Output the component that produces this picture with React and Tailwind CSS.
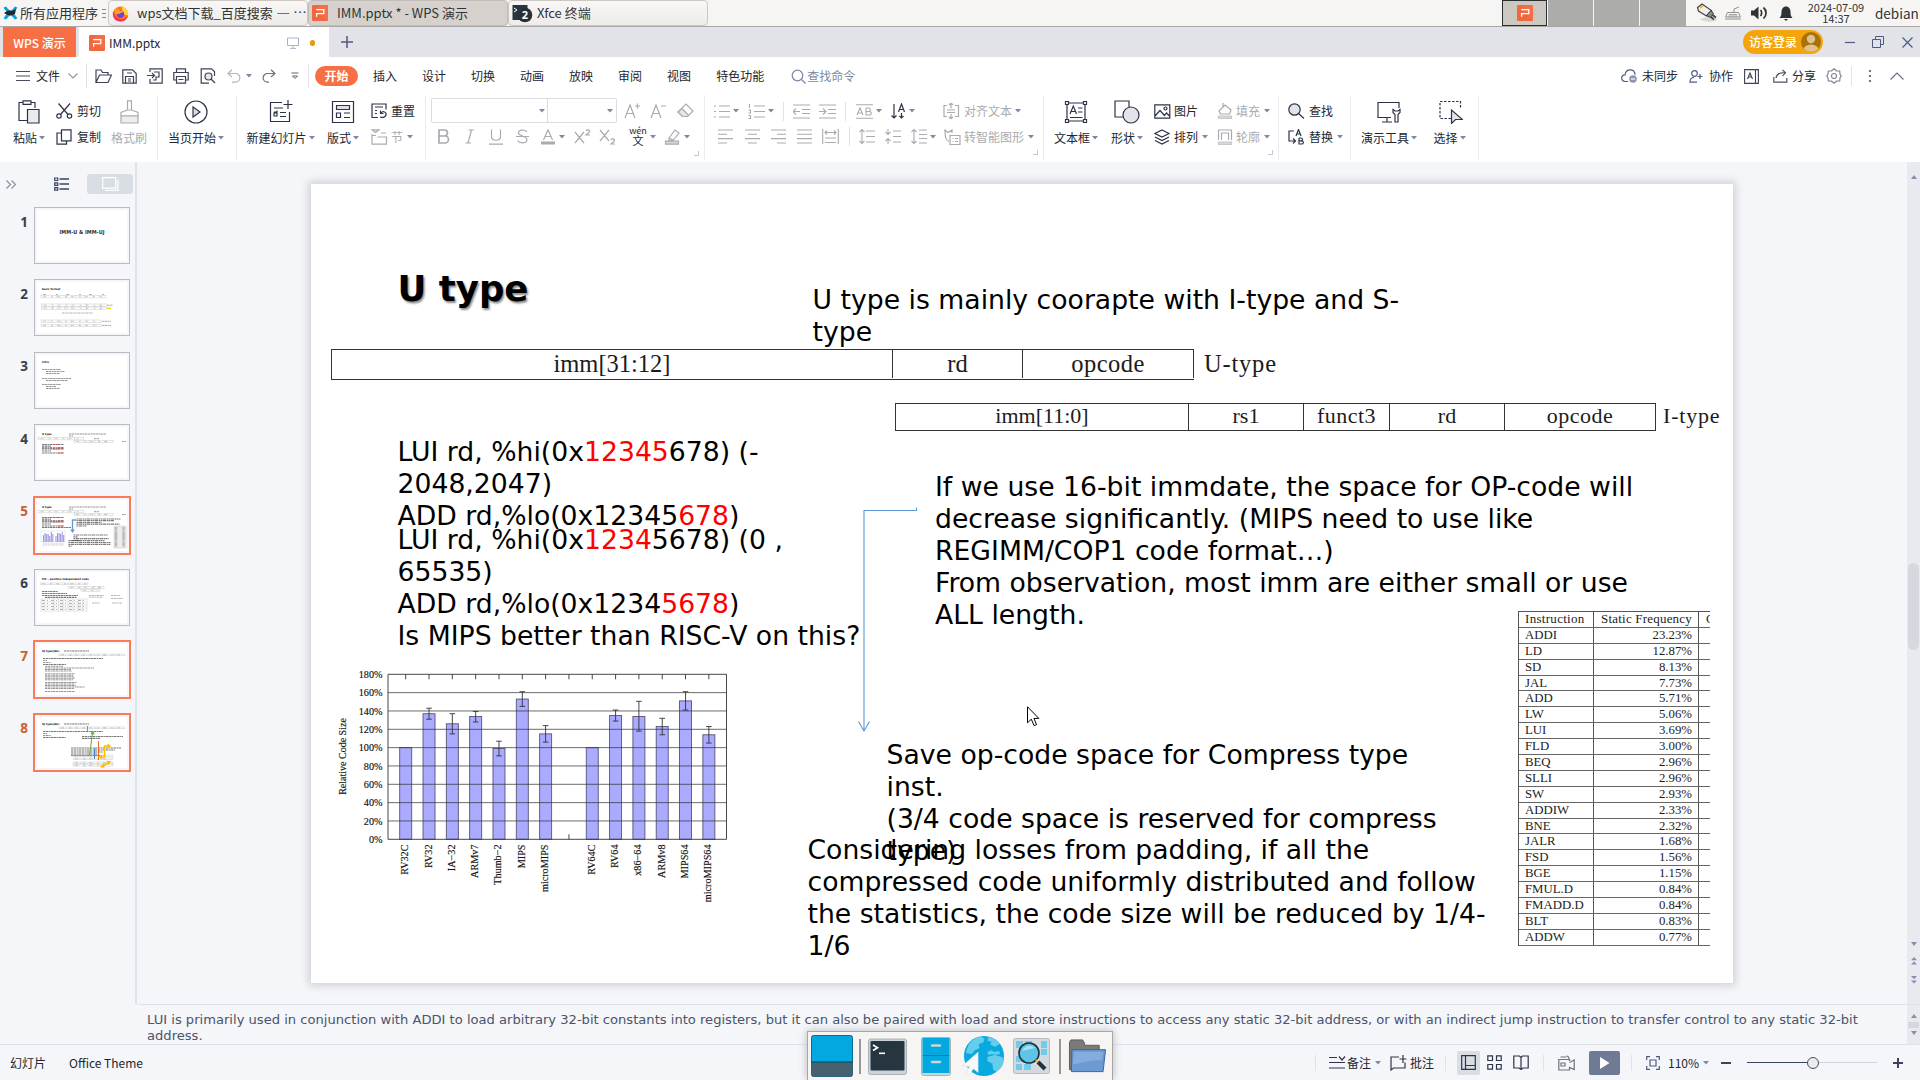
import React from "react";

/* ---------- shared pieces ---------- */

function Svg({ w = 16, h = 16, className = "", sw = 1.2, children }) {
  return (
    <svg
      width={w}
      height={h}
      viewBox={`0 0 ${w} ${h}`}
      fill="none"
      stroke="currentColor"
      strokeWidth={sw}
      className={"shrink-0 " + className}
    >
      {children}
    </svg>
  );
}

function Caret({ className = "ml-[2px]" }) {
  return (
    <svg width="6" height="4" viewBox="0 0 6 4" className={"shrink-0 " + className}>
      <path d="M0 0h6L3 3.6z" fill="#7c88a6" />
    </svg>
  );
}

function Big({ className, icon, label, caret = true }) {
  return (
    <div className={"flex shrink-0 flex-col items-center " + className}>
      <div className="flex h-[32px] items-center">{icon}</div>
      <div className="flex h-5 items-center whitespace-nowrap">
        <span>{label}</span>
        {caret && <Caret />}
      </div>
    </div>
  );
}

function Group({ className, children }) {
  return <div className={"flex h-[64px] shrink-0 border-r border-[#e9ebf0] " + className}>{children}</div>;
}

function Row({ children, className = "" }) {
  return <div className={"flex h-[27px] items-center whitespace-nowrap " + className}>{children}</div>;
}

function VLine({ className }) {
  return <div className={"w-px shrink-0 bg-[#dfe2e8] " + className} />;
}

function PLogo({ w = 16, h = 16, className = "" }) {
  return (
    <svg width={w} height={h} viewBox="0 0 16 16" className={"shrink-0 " + className}>
      <rect width="16" height="16" rx="1.2" fill="#f0683f" />
      <path d="M8 0h6.8a1.2 1.2 0 0 1 1.2 1.2V16L4 4z" fill="#f4744d" opacity=".6" />
      <path d="M4.2 4.7h7.6v4H4.6v3" fill="none" stroke="#fff" strokeWidth="1.3" />
    </svg>
  );
}

/* ---------- desktop panel ---------- */

function DesktopPanel() {
  return (
    <div className="flex h-[27px] border-b border-[#aaa6a2] bg-[#f6f5f4] text-[13px] text-[#2e3436]">
      <div className="flex w-[108px] items-center pl-[3px] whitespace-nowrap">
        <Svg w={15} h={16} sw={3}>
          <path d="M2 2c2 5 9 7 11 12M13 2c-2 5-9 7-11 12" stroke="#00a3e0" />
          <path d="M1 8c3-2 4-3 8-2l4-2-1 5c-3 2-7 2-11-1z" fill="#20272b" stroke="none" />
        </Svg>
        <span className="ml-[2px]">所有应用程序</span>
        <div className="ml-[4px] flex flex-col gap-[3px]">
          <div className="h-px w-1 bg-[#8a8a88]" />
          <div className="h-px w-1 bg-[#8a8a88]" />
          <div className="h-px w-1 bg-[#8a8a88]" />
        </div>
      </div>
      <div className="flex h-[26px] w-[200px] items-center rounded-[4px] border border-[#cdc7c2] bg-gradient-to-b from-[#f8f7f6] to-[#eeecea] pl-[3px] whitespace-nowrap">
        <svg width="17" height="17" viewBox="0 0 17 17" className="shrink-0">
          <circle cx="8.5" cy="9" r="7.6" fill="#ff7a1a" />
          <path d="M10 1c4 2 6.500 5 6.300 9-2 1-5-1-6-4z" fill="#ffd43a" />
          <path d="M1 6C0 12 3 16.500 8.500 16.600c4 0 7-3 7.600-6-3 4-9 5-12 1.500C2.500 10 2 8 1 6z" fill="#f5305f" />
          <circle cx="8.400" cy="9.300" r="3.700" fill="#7a3fd0" />
          <path d="M3 4.500c2-.5 4 0 5 1.500 2 0 3 .5 3 1-1 1-3 .5-4 2L3.500 9z" fill="#ffa51f" />
        </svg>
        <span className="ml-[8px]">wps文档下载_百度搜索</span>
        <span className="ml-[4px] font-['Noto_Sans'] text-[#6e7375]">—</span>
        <span className="ml-[4px] font-['Noto_Sans'] tracking-[1px]">···</span>
      </div>
      <div className="flex h-[26px] w-[200px] items-center rounded-[4px] border border-[#c3bdb8] bg-[#d6d1cd] pl-[3px] whitespace-nowrap">
        <PLogo />
        <span className="ml-[9px]">IMM.pptx * - WPS 演示</span>
      </div>
      <div className="flex h-[26px] w-[200px] items-center rounded-[4px] border border-[#cdc7c2] bg-gradient-to-b from-[#f8f7f6] to-[#eeecea] pl-[3px] whitespace-nowrap">
        <svg width="21" height="19" viewBox="0 0 21 19">
          <rect x=".5" y="1" width="15" height="15" fill="#263640" />
          <path d="M2 4l3 2-3 2" fill="none" stroke="#fff" strokeWidth="1" />
          <circle cx="13" cy="11" r="7.300" fill="#2b2f33" />
          <text x="13" y="15" fill="#fff" fontSize="11" fontWeight="bold" textAnchor="middle" className="font-['Noto_Sans']">
            2
          </text>
        </svg>
        <span className="ml-1">Xfce 终端</span>
      </div>
      <div className="flex-1" />
      <div className="flex h-[26px] gap-px">
        <div className="flex h-[26px] w-[45px] items-center justify-center border border-[#2b2f31] bg-[#cbc7c1]">
          <PLogo />
        </div>
        <div className="w-[45px] bg-[#acacaa]" />
        <div className="w-[45px] bg-[#acacaa]" />
        <div className="w-[46px] bg-[#acacaa]" />
      </div>
      <div className="flex w-[234px] items-center">
        <svg width="22" height="20" viewBox="0 0 22 20" className="ml-[10px] shrink-0">
          <path d="M4 16c3 3 11 4 17 1l-3-5z" fill="#000" opacity=".12" />
          <path d="M1.500 4.500L6 1l9.500 6.500-5 5.500-8-5z" fill="#efefed" stroke="#444" strokeWidth="1.200" />
          <path d="M10.500 12.500L15 7.500l2.500 3-3 4z" fill="#8b8b88" stroke="#333" />
          <path d="M16.500 12l3.500 2.500M15 14l3 2.500" stroke="#444" strokeWidth="1.800" />
          <path d="M4 5l3-2.500" stroke="#e8b33a" strokeWidth="1.800" />
        </svg>
        <svg width="18" height="14" viewBox="0 0 18 14" className="ml-[6px] shrink-0" fill="none" stroke="#8f8f8d">
          <path d="M3.500 6.500h11l2 4.500H1.500zM1 13h16" />
          <path d="M5 8.500h8M4.500 10h9" strokeWidth=".8" />
          <path d="M10 6V3l5-2" />
        </svg>
        <svg width="17" height="14" viewBox="0 0 17 14" className="ml-[9px] shrink-0">
          <path d="M0 4.500h3L7.500.5v13L3 9.500H0z" fill="#2e3436" />
          <path d="M9.500 4c1.500 1.500 1.500 4.500 0 6M12.500 1.500c3.400 3 3.400 8 0 11" fill="none" stroke="#2e3436" strokeWidth="1.700" />
        </svg>
        <svg width="14" height="15" viewBox="0 0 14 15" className="ml-[11px] shrink-0">
          <path d="M7 .5c3 0 4.500 2.500 4.500 5.500 0 3 .5 4.500 2 6H.5c1.500-1.500 2-3 2-6C2.500 3 4 .5 7 .5zM5 13h4l-2 2z" fill="#2e3436" />
        </svg>
        <div className="ml-[14px] w-[58px] shrink-0 text-center text-[11px] leading-[11px] whitespace-nowrap">
          <div>2024-07-09</div>
          <div>14:37</div>
        </div>
        <span className="ml-[10px] text-[13.500px]">debian</span>
      </div>
    </div>
  );
}

/* ---------- window title / tabs ---------- */

function TabBar() {
  return (
    <div className="flex h-[30px] items-center bg-[#e1e3e8] pl-[3px] text-[12px]">
      <div className="flex h-full w-[73px] items-center justify-center bg-[#f66f45] pt-px font-medium whitespace-nowrap text-white">
        WPS 演示
      </div>
      <div className="ml-[3px] flex h-full w-[250px] items-center bg-white pt-[2px] pl-[10px] text-[#23262d]">
        <PLogo />
        <span className="ml-1 w-[179px] text-[12px] whitespace-nowrap">IMM.pptx</span>
        <Svg w={12} h={12} sw={1} className="-ml-[1px] text-[#aab3cc]">
          <path d="M.5 1h11v7.500H.5zM6 8.500V11M3 11.400h6" />
        </Svg>
        <div className="ml-[11px] h-[6px] w-[5px] rounded-full bg-[#e59a0c]" />
      </div>
      <Svg w={12} h={12} sw={1.500} className="ml-[12px] text-[#4d5b80]">
        <path d="M6 0v12M0 6h12" />
      </Svg>
      <div className="flex-1" />
      <VLine className="h-5 bg-[#c7cad3]" />
      <div className="ml-[8px] flex h-6 w-[80px] items-center rounded-full bg-[#f5a50c] pl-[6px] text-[12px] font-medium text-white">
        <span className="whitespace-nowrap">访客登录</span>
        <svg width="20" height="20" viewBox="0 0 20 20" className="ml-[4px] shrink-0">
          <clipPath id="av"><circle cx="10" cy="10" r="10" /></clipPath>
          <circle cx="10" cy="10" r="10" fill="#a8720a" />
          <g clipPath="url(#av)" fill="#dfc28c">
            <circle cx="10" cy="7" r="4.200" />
            <ellipse cx="10" cy="18" rx="7.500" ry="5.500" />
          </g>
        </svg>
      </div>
      <VLine className="ml-[8px] h-5 bg-[#c7cad3]" />
      <Svg w={10} h={12} className="ml-[13px] text-[#4d5b80]"><path d="M0 6.500h10" /></Svg>
      <Svg w={12} h={12} sw={1} className="ml-[17px] text-[#4d5b80]">
        <path d="M.5 3.500h8v8h-8zM3.500 3.500v-3h8v8h-3" />
      </Svg>
      <Svg w={11} h={11} className="mr-[7px] ml-[18px] text-[#4d5b80]"><path d="M.5.5l10 10M10.500.5l-10 10" /></Svg>
    </div>
  );
}

/* ---------- menu bar ---------- */

const menus = ["插入", "设计", "切换", "动画", "放映", "审阅", "视图", "特色功能"];

function MenuBar() {
  return (
    <div className="flex h-[38px] items-center bg-white pl-[16px] text-[12px] text-[#23262d]">
      <Svg w={14} h={12} className="text-[#4a4f5c]"><path d="M0 1.500h14M0 6h14M0 10.500h14" /></Svg>
      <span className="ml-[6px]">文件</span>
      <Svg w={10} h={6} className="ml-[8px] text-[#8f95a3]"><path d="M.5.5L5 5 9.500.5" /></Svg>
      <VLine className="ml-[8px] h-6" />
      <div className="flex items-center text-[#3d4354]">
        <Svg w={17} h={15} className="ml-[8px]"><path d="M1 13.500V1h5l1.500 2.500H13v2.500M1 13.500L4.500 6H16.500L13 13.500z" /></Svg>
        <Svg w={15} h={15} className="ml-[10px]"><path d="M.8.8h9.700l3.700 3.700v9.700H.8zM3.500 14V7.500h8V14M5 4h5M6 10h3M6 12h3" /></Svg>
        <Svg w={16} h={16} className="ml-[10px]"><path d="M3 4V.8h12.200v14.400H3V11M0 7.500h7.500M5 5l2.500 2.500L5 10M7 4h5v5H9v3H6" /></Svg>
        <Svg w={16} h={16} className="ml-[10px]"><path d="M3.500 4V.8h9V4M3.500 12H.8V4.500h14.400V12h-2.700M3.500 8.500h9v6.700h-9zM5.500 11.500h5" /></Svg>
        <Svg w={16} h={16} className="ml-[11px]"><path d="M14.500 8V3.500L11.500.8H1.200v14.400H9" /><circle cx="8.500" cy="8.500" r="3.500" fill="#e3e5ea" /><path d="M11 11l4 4" /></Svg>
      </div>
      <Svg w={14} h={14} className="ml-[11px] text-[#b3b6be]"><path d="M5 .8L1 4.500 5 8M1 4.500h7.500a4.300 4.300 0 0 1 0 8.700H5" /></Svg>
      <Caret className="ml-[5px]" />
      <Svg w={14} h={14} className="ml-[10px] text-[#6d7280]"><path d="M9 .8l4 3.700L9 8M13 4.500H5.500a4.300 4.300 0 0 0 0 8.700H7" /></Svg>
      <Svg w={8} h={8} sw={1} className="ml-[15px] text-[#5d6373]"><path d="M.5 1h7M1.500 4L4 6.500 6.500 4z" /></Svg>
      <VLine className="ml-[9px] h-6" />
      <div className="ml-[6px] flex h-5 w-[43px] items-center justify-center rounded-full bg-[#f66f45] font-bold text-white">开始</div>
      <div className="ml-[15px] flex gap-[25px] whitespace-nowrap">
        {menus.map((m) => <span key={m}>{m}</span>)}
      </div>
      <Svg w={15} h={15} className="ml-[27px] text-[#7c88a6]"><circle cx="6.500" cy="6.500" r="5.300" /><path d="M10.500 10.500l4 4" /></Svg>
      <span className="ml-[1px] text-[#7c88a6]">查找命令</span>
      <div className="flex-1" />
      <Svg w={17} h={14} className="text-[#4d5b80]">
        <path d="M7 12.500H4a3.300 3.300 0 0 1 0-6.600C4.500 2.500 6.500.8 9 .8c3 0 5 2 5 5" />
        <circle cx="12" cy="10" r="3.800" fill="#8b96b3" stroke="none" />
        <path d="M10 10h4" stroke="#fff" />
      </Svg>
      <span className="ml-[4px]">未同步</span>
      <Svg w={14} h={13} className="ml-[11px] text-[#4d5b80]"><circle cx="5.500" cy="3.500" r="2.800" /><path d="M8 12.200H1C1 9 2.500 7.500 5 7.500M11 4v5M8.500 6.500h5" /></Svg>
      <span className="ml-[6px]">协作</span>
      <Svg w={15} h={15} sw={1.100} className="ml-[11px] text-[#3d4354]">
        <path d="M.6.6h13.800v13.800H.6zM11.500.6v13.800M3.500 10L6 4l2.500 6M4.500 8h3" />
      </Svg>
      <Svg w={15} h={14} className="ml-[14px] text-[#4d5366]"><path d="M.8 8v5.200h13V9M3 9c.5-4 4-5.500 9-5.200M9.500.8l3 3-3 3" /></Svg>
      <span className="ml-[4px]">分享</span>
      <Svg w={16} h={16} sw={1.200} className="ml-[10px] text-[#83889a]">
        <path d="M8 .8l2.500 2 3.200.2.300 3 1.200 2-1.200 2-.3 3-3.200.2-2.500 2-2.500-2-3.200-.2-.3-3L.8 8 2 6l.3-3 3.200-.2z" />
        <circle cx="8" cy="8" r="2.500" />
      </Svg>
      <VLine className="ml-[9px] h-5" />
      <Svg w={2} h={12} className="ml-[17px]"><path d="M0 1h2M0 6h2M0 11h2" stroke="#6b7690" strokeWidth="2" /></Svg>
      <Svg w={14} h={8} className="mr-4 ml-[19px] text-[#6d7280]"><path d="M.5 7.500L7 1l6.500 6.500" /></Svg>
    </div>
  );
}

/* ---------- ribbon ---------- */

const dark = "text-[#2e3448]";
const dim = "text-[#a9abb0]";

function Lines({ d, w = 16, className = "" }) {
  return <Svg w={w} h={15} className={className + " text-[#a9abb0]"} sw={1.1}><path d={d} /></Svg>;
}

function Ribbon() {
  return (
    <div className="flex h-[67px] bg-white pt-px text-[12px] text-[#23262d]">
      <Group className="w-[158px] pl-[13px]">
        <Big className="w-[32px]" label="粘贴" icon={
          <Svg w={22} h={24} className={dark}><path d="M9 20.500H1V2.500h4M13 2.500h4V8M5 .8h8v3.500H5z" /><path d="M9.500 9.500h11.500V23H9.500z" fill="#e9eaee" /></Svg>} />
        <div className="ml-[11px] w-[46px]">
          <Row className="pt-[3px]">
            <Svg w={17} h={16} className={dark}><path d="M2.500.5l9.500 11M14 .5L4.500 11.500" /><circle cx="3" cy="13" r="2.200" /><circle cx="13.500" cy="13" r="2.200" /></Svg>
            <span className="ml-1">剪切</span>
          </Row>
          <Row>
            <Svg w={16} h={16} className={dark}><path d="M5.500.8h9.500v11H5.500zM5.500 4H1v11.200h9.500V12" /></Svg>
            <span className="ml-[5px]">复制</span>
          </Row>
        </div>
        <div className={"ml-[9px] " + dim}>
          <Big className="w-[36px]" label="格式刷" caret={false} icon={
            <Svg w={19} h={24}><path d="M7.500 10V.8h4V10M1 16v-3.500L7.500 10h4l6.500 2.500V16z" /><path d="M1 16h17v7H1z" fill="#eceded" /></Svg>} />
        </div>
      </Group>

      <Group className="w-[79px] pl-[10px]">
        <Big className="w-[56px]" label="当页开始" icon={
          <Svg w={24} h={24} className={dark}><circle cx="12" cy="12" r="11" /><path d="M9 7l7 5-7 5z" fill="#dddfe5" /></Svg>} />
      </Group>

      <Group className="w-[189px] pl-[9px]">
        <Big className="w-[69px]" label="新建幻灯片" icon={
          <Svg w={24} h={24} className={dark}><path d="M13 2.500H1.500v19h19V12M19 0v9M14.500 4.500h9M5 8h9M5 12h3v-1.500M5 13h3v3H5zM11 12.500h6M11 16.500h6" /></Svg>} />
        <Big className="ml-[12px] w-[32px]" label="版式" icon={
          <Svg w={24} h={24} className={dark}><path d="M1.500 1.500h21v21h-21z" /><path d="M5.500 5.500h13v4h-13z" fill="#dddfe5" /><path d="M5.500 13h4v4.500h-4zM13 13h6M13 17.500h6" /></Svg>} />
        <div className="ml-[12px]">
          <Row className="pt-[3px]">
            <Svg w={17} h={16} className={dark}><path d="M15 6.500V1H1v13.500h6M4 4h8M4 7.500h2M4 10.500h2M9 14c4 1.500 6.500-1 6-3.500-.5-2-3.500-2.500-5-.5M9.500 7.500v3h3" /></Svg>
            <span className="ml-[3px]">重置</span>
          </Row>
          <Row className={dim}>
            <Svg w={17} h={16}><path d="M1 .8h7L4.500 3.500zM10 4h5M1 6.500h4M1 5v10.200h14.500V8H6.500" /></Svg>
            <span className="ml-[3px]">节</span>
            <Caret className="ml-[4px]" />
          </Row>
        </div>
      </Group>

      <Group className="w-[279px] flex-col pl-[5px]">
        <Row className={"pt-[2px] " + dim}>
          <div className="flex h-[25px] w-[186px] rounded-[2px] border border-[#d9dce2]">
            <div className="flex w-[117px] items-center justify-end border-r border-[#d9dce2] pr-[2px]"><Caret /></div>
            <div className="flex w-[68px] items-center justify-end pr-[3px]"><Caret /></div>
          </div>
          <Svg w={17} h={16} className="ml-[7px]"><path d="M1 15L6 2l5 13M3 10.500h6.500M11 3h5M13.500.5v5" /></Svg>
          <Svg w={17} h={16} className="ml-[9px]"><path d="M1 15L6 2l5 13M3 10.500h6.500M11 3h5" /></Svg>
          <Svg w={17} h={15} className="ml-[10px]"><path d="M1 9l8-8 7 7-5.500 5.500h-5z" /><path d="M5 5.500L11.500 12l-1 1.500h-5L1 9z" fill="#e4e5e8" /></Svg>
        </Row>
        <Row className={dim}>
          <Svg w={13} h={15} sw={1.700} className="ml-[6px]"><path d="M2 1h5.500a3 3 0 0 1 0 6H2zM2 7h6a3.300 3.300 0 0 1 0 7H2z" /></Svg>
          <Svg w={10} h={15} className="ml-[15px]"><path d="M3.500 1H9M.5 14H6M6.500 1L3 14" /></Svg>
          <Svg w={14} h={16} className="ml-[14px]"><path d="M2.500.5v7c0 5 9 5 9 0v-7M0 15.200h14" /></Svg>
          <Svg w={13} h={15} className="ml-[13px]"><path d="M11 3C9 0 2.500.5 2.500 4c0 3 8.500 3 8.500 6.500 0 4-7.500 4.500-9.500 1M0 7.500h13" /></Svg>
          <Svg w={14} h={16} className="ml-[12px]"><path d="M2.500 11L7 .8 11.500 11M4 7.500h6" /><path d="M0 14h14" strokeWidth="3" /></Svg>
          <Caret className="ml-[4px]" />
          <Svg w={17} h={16} className="ml-[9px]"><path d="M1 3l9 11M10 3L1 14M12 2c1-2 4-1 3.500.5-.5 1.500-2 2-3.500 3.500h4" /></Svg>
          <Svg w={17} h={16} className="ml-[8px]"><path d="M1 1l9 11M10 1L1 12M12 11c1-2 4-1 3.500.5-.5 1.500-2 2-3.500 3.500h4" /></Svg>
          <div className="ml-[13px] flex w-[18px] flex-col items-center text-[#23262d]">
            <span className="text-[9px] leading-[8px]">wén</span>
            <span className="text-[11px] leading-[11px]">文</span>
          </div>
          <Caret className="ml-[3px]" />
          <Svg w={17} h={16} className="ml-[8px]"><path d="M5 9l6-8 4 3-6 7.500H5zM5.500 9l4 2.500" /><path d="M1.500 12.200h13v3h-13z" fill="#d6d7da" /></Svg>
          <Caret className="ml-[3px]" />
        </Row>
        <div className="mt-[1px] mr-[5px] h-[5px] w-[5px] self-end border-r border-b border-[#c3c8d4]" />
      </Group>

      <Group className="w-[339px] flex-col pl-[8px]">
        <Row className={"pt-[3px] " + dim}>
          <Lines w={17} d="M6 2h11M6 7.500h11M6 13h11M1 2h2M1 7.500h2M1 13h2" />
          <Caret className="ml-[3px]" />
          <Lines w={17} className="ml-[9px]" d="M6 2h11M6 7.500h11M6 13h11M1.500 0v4M.5 6h2v3h-2M.5 11.500h2v3h-2" />
          <Caret className="ml-[3px]" />
          <VLine className="ml-[9px] h-[19px]" />
          <Lines w={17} className="ml-[9px]" d="M0 1h17M9 5.500h8M9 9.500h8M0 14h17M0 7.500h7M3 4.500l-3 3 3 3" />
          <Lines w={17} className="ml-[9px]" d="M0 1h17M9 5.500h8M9 9.500h8M0 14h17M0 7.500h7M4 4.500l3 3-3 3" />
          <VLine className="ml-[9px] h-[19px]" />
          <Lines w={17} className="ml-[10px]" d="M0 .7h17M0 14.300h17M1 11l3-7 3 7M2.200 9h4M10 4v7h3c3 0 3-3.500 0-3.500h-3M10 4h2.500c2.500 0 2.500 3.500 0 3.500" />
          <Caret className="ml-[3px]" />
          <Svg w={15} h={16} className={"ml-[9px] " + dark}><path d="M3 1v14M.5 12.500L3 15l2.500-2.500M7.500 9L10.500 1l3 8M8.500 6.500h4M10.500 10v5M8.500 13l2 2 2-2" /></Svg>
          <Caret className="ml-[3px]" />
          <Svg w={17} h={16} className="ml-[28px]"><path d="M4 2.500H1v11h3M12 2.500h3.500v11H12M4 7h8M4 9.500h8M8 0v5.500M6 2l2-2 2 2M8 11v5M6 14l2 2 2-2" /></Svg>
          <span className="ml-[4px]">对齐文本</span>
          <Caret className="ml-[3px]" />
        </Row>
        <Row className={dim}>
          <Lines w={15} className="ml-[5px]" d="M0 1h15M0 5.300h9M0 9.600h15M0 14h9" />
          <Lines w={15} className="ml-[12px]" d="M0 1h15M3 5.300h9M0 9.600h15M3 14h9" />
          <Lines w={15} className="ml-[11px]" d="M0 1h15M6 5.300h9M0 9.600h15M6 14h9" />
          <Lines w={15} className="ml-[11px]" d="M0 1h15M0 5.300h15M0 9.600h15M0 14h15" />
          <Lines w={17} className="ml-[10px]" d="M.7 0v15M16.300 0v15M3 3.500h11M5 1.500l-2 2 2 2M12 1.500l2 2-2 2M3 9h11M3 13.500h11" />
          <VLine className="ml-[10px] h-[19px]" />
          <Lines w={16} className="ml-[9px]" d="M7 2h9M7 7.500h9M7 13h9M3 0v15M.5 3L3 .5 5.500 3M.5 12L3 14.500 5.500 12" />
          <Lines w={16} className="ml-[10px]" d="M8 2h8M8 7.500h8M8 13h8M3 0v5M.5 3L3 5.500 5.500 3M3 10v5M.5 12L3 9.500 5.500 12" />
          <Lines w={16} className="ml-[10px]" d="M8 1h8M8 5.500h8M8 9.500h8M8 14h8M3 0v15M.5 3L3 .5 5.500 3M.5 12L3 14.500 5.500 12" />
          <Caret className="ml-[3px]" />
          <Svg w={17} h={16} className="ml-[8px]"><path d="M5 12.500C1.500 11 1 8 1 1l3 2.500L8 1v3M6 6.500h10v9H6zM8.500 9.500h1M8.500 12.500h1M11 9.500h3M11 12.500h3" /></Svg>
          <span className="ml-[3px]">转智能图形</span>
          <Caret className="ml-[4px]" />
        </Row>
        <div className="mt-0 mr-[5px] h-[5px] w-[5px] self-end border-r border-b border-[#c3c8d4]" />
      </Group>

      <Group className="w-[235px] pl-[10px]">
        <Big className="w-[44px]" label="文本框" icon={
          <Svg w={24} h={24} className={dark}><path d="M3 3h18v18H3zM6 14l3.300-8 3.200 8M7 11.500h4.500M14 8h4.500M14 12h4.500M6 17.500h12.500" /><path d="M1.500 1.500h3v3h-3zM19.500 1.500h3v3h-3zM1.500 19.500h3v3h-3zM19.500 19.500h3v3h-3z" fill="#fff" /></Svg>} />
        <Big className="ml-[13px] w-[32px]" label="形状" icon={
          <Svg w={26} h={24} className={dark}><path d="M1 1h14v16H1z" /><circle cx="17" cy="15" r="8" fill="#e3e4e9" /></Svg>} />
        <div className="ml-[11px] w-[57px]">
          <Row className="pt-[3px]">
            <Svg w={17} h={15} className={dark}><path d="M.8.8h15v13.400H.8zM1 12l5-5.500 4.500 5L12.500 9l3.500 3.500" /><circle cx="11.500" cy="4.500" r="1.500" /></Svg>
            <span className="ml-[3px]">图片</span>
          </Row>
          <Row>
            <Svg w={17} h={16} className={dark}><path d="M8 1l7 3.500L8 8 1 4.500zM1 8l7 3.500L15 8M1 11.500L8 15l7-3.500" /></Svg>
            <span className="ml-[3px]">排列</span>
            <Caret className="ml-[4px]" />
          </Row>
        </div>
        <div className={"ml-[6px] " + dim}>
          <Row className="pt-[3px]">
            <Svg w={17} h={16}><path d="M2 8l6-6 6 5-1.500 4h-9zM6 4V0" /><path d="M1.500 13h13v2.500h-13z" fill="#d6d7da" stroke="#c8c9cc" /></Svg>
            <span className="ml-[2px]">填充</span>
            <Caret className="ml-[4px]" />
          </Row>
          <Row>
            <Svg w={17} h={16}><path d="M1.500 11V1h13v10M4.500 11V4h7v7" /><path d="M1.500 13h13v2.500h-13z" fill="#d6d7da" stroke="#c8c9cc" /></Svg>
            <span className="ml-[2px]">轮廓</span>
            <Caret className="ml-[4px]" />
          </Row>
          <div className="mt-0 ml-[51px] h-[5px] w-[5px] border-r border-b border-[#c3c8d4]" />
        </div>
      </Group>

      <Group className="w-[72px] pl-[9px]">
        <div>
          <Row className="pt-[3px]">
            <Svg w={17} h={16} className={dark}><circle cx="6.500" cy="6.500" r="5.700" fill="#e3e4e9" /><path d="M10.500 10.500l5.500 5" /></Svg>
            <span className="ml-[4px]">查找</span>
          </Row>
          <Row>
            <Svg w={17} h={16} className={dark}><path d="M6 2H1v10h6M5 9.500L7.500 12 5 14.500M8 7l2.500-6.500L13 7M9 5h3.500M11 9v6h2.500c2.500 0 2.500-3.200 0-3.200H11M11 9h2c2 0 2 2.800 0 2.800" /></Svg>
            <span className="ml-[4px]">替换</span>
            <Caret className="ml-[4px]" />
          </Row>
        </div>
      </Group>

      <Group className="w-[128px] pl-[9px]">
        <Big className="w-[58px]" label="演示工具" icon={
          <Svg w={24} h={24} className={dark}><path d="M14 17.500H1v-15h21V8M10 17.500v4M5 22h10" /><path d="M16 9.500v3l2 2V22h3v-7.500l2-2v-3l-2 1.500h-3z" fill="#fff" /></Svg>} />
        <Big className="ml-[15px] w-[33px]" label="选择" icon={
          <Svg w={24} h={24} className={dark + " ml-[2px]"}><path d="M12 18.500H1v-17h20.500V9" strokeDasharray="2.500 1.500" /><path d="M12.500 10v13.500l4-4h7z" fill="#e3e4e9" /></Svg>} />
      </Group>
    </div>
  );
}

/* ---------- thumbnails ---------- */

function Scribble({ x, y, w, dash = "2 .5 3 .6 1.500 .4", c = "#555", h = 1 }) {
  return <path d={`M${x} ${y}h${w}`} stroke={c} strokeWidth={h} strokeDasharray={dash} opacity=".6" />;
}

function Table({ x, y, w, h = 2.400, cells = [] }) {
  return (
    <g>
      <rect x={x} y={y} width={w} height={h} fill="none" stroke="#bbb" strokeWidth=".4" />
      {cells.map((c) => <path key={c} d={`M${x + c} ${y}v${h}`} stroke="#bbb" strokeWidth=".4" />)}
      <Scribble x={x + 2} y={y + h / 2} w={w - 4} c="#999" h={0.800} dash="3 5 2 4" />
    </g>
  );
}

function Title({ x = 5, children }) {
  return <text x={x} y="7.500" fontSize="2.600" fontWeight="bold" fill="#111" className="font-['DejaVu_Sans']">{children}</text>;
}

function UTypeTop() {
  return (
    <g>
      <Title>U type</Title>
      <Scribble x={32} y={7} w={37} h={1.200} />
      <Scribble x={32} y={9} w={4} h={1.200} />
      <Table x={1.500} y={10.500} w={45} cells={[29, 36]} />
      <Scribble x={57} y={11.700} w={5} h={0.900} />
      <Table x={37} y={13.500} w={39} h={2} cells={[15, 21, 25.500, 32]} />
      <Scribble x={85} y={14.500} w={4} h={0.900} />
      {[17.500, 19.200, 20.900, 22, 24, 26].map((y, i) => (
        <g key={y}>
          <Scribble x={5} y={y} w={i % 3 === 1 ? 9 : 22} h={1.200} c="#222" />
          {i % 3 !== 1 && <Scribble x={i % 3 === 0 ? 16 : 21} y={y} w={6} h={1.200} c="#f33" />}
        </g>
      ))}
    </g>
  );
}

const thumbs = [
  <text key="a" x="45" y="24" fontSize="5.600" fontWeight="bold" textAnchor="middle" fill="#333" className="font-['DejaVu_Sans']" textLength="45" lengthAdjust="spacingAndGlyphs">IMM-U &amp; IMM-UJ</text>,
  <g key="b">
    <Title>basic format</Title>
    <Scribble x={6} y={12.500} w={64} h={0.700} dash="3 10 2 8" />
    <Table x={4} y={13.500} w={65} cells={[16, 25, 35, 43, 52]} />
    <Table x={4.500} y={22} w={65} cells={[45, 59]} />
    <Table x={4.500} y={25} w={65} cells={[11, 23, 30, 45, 59]} />
    <Scribble x={70} y={23.200} w={6} h={0.800} />
    <rect x="70" y="25.400" width="4" height="1.600" fill="#f2e500" />
    <Scribble x={25} y={31} w={31} h={0.900} c="#777" />
    <Table x={4} y={38} w={60} cells={[8, 20, 30]} />
    <Table x={4} y={42.300} w={60} cells={[20, 30, 38, 55]} />
    <Scribble x={65} y={39.300} w={9} h={0.800} />
    <Scribble x={65} y={43.500} w={9} h={0.800} />
  </g>,
  <g key="c">
    <Title>Intro</Title>
    <Scribble x={5} y={14.500} w={19} /><Scribble x={9} y={16.500} w={19} /><Scribble x={9} y={18.500} w={14} />
    <Scribble x={5} y={23.500} w={29} /><Scribble x={9} y={25.500} w={22} />
    <Scribble x={5} y={29.500} w={19} /><Scribble x={9} y={31.500} w={10} /><Scribble x={9} y={33.500} w={14} />
  </g>,
  <UTypeTop key="d" />,
  <g key="e">
    <UTypeTop />
    <Scribble x={5} y={27.500} w={29} h={1.200} c="#222" />
    {[19, 20.700, 22.500, 24.200, 26].map((y, i) => <Scribble key={y} x={39.500} y={y} w={[44, 38, 25, 43, 10][i]} h={1.200} c="#222" />)}
    {[35, 36.800, 38.600, 40.500].map((y, i) => <Scribble key={y} x={36.500} y={y} w={[34, 4, 35, 6][i]} h={1.200} c="#222" />)}
    {[40.700, 42.500, 44.300, 46.200].map((y, i) => <Scribble key={y} x={31.500} y={y} w={[36, 42, 42, 3][i]} h={1.200} c="#222" />)}
    <path d="M39 20h-3.500v10" fill="none" stroke="#5b9bd5" strokeWidth="1.300" />
    <path d="M33.200 29.500h4.600l-2.300 3.500z" fill="#5b9bd5" />
    <rect x="4" y="31" width="24" height="11" fill="none" stroke="#ccc" strokeWidth=".4" />
    {[35, 33, 34, 34, 36, 32, 34, 0, 36, 33, 33, 34, 32, 35].map((t, i) => t > 0 && <rect key={i} x={6 + i * 1.550} y={t} width="1.100" height={42 - t} fill="#9a98e0" />)}
    <Scribble x={6} y={44.500} w={21} h={3} c="#bbb" dash=".8 .8" />
    <rect x="77" y="26" width="12" height="22" fill="#ededed" stroke="#bbb" strokeWidth=".4" />
    <path d="M79 27.500v19M86.500 27.500v19" stroke="#888" strokeWidth="2.500" strokeDasharray=".5 .6" />
  </g>,
  <g key="f">
    <Title>PIC - position independent code</Title>
    <Table x={3} y={11} w={48} h={1.600} cells={[28, 34]} />
    <Table x={31} y={14.300} w={36} cells={[13, 26, 31]} />
    <Table x={44} y={17.200} w={19} cells={[12]} />
    <Scribble x={5} y={19.500} w={16} h={1.200} c="#222" /><Scribble x={5} y={21.500} w={25} h={1.200} c="#222" />
    <Scribble x={5} y={23.500} w={36} h={1.200} c="#222" /><Scribble x={8} y={25.300} w={32} h={1.200} c="#222" />
    {[27, 30, 33, 36, 39].map((y) => <path key={y} d={`M4 ${y}h46`} stroke="#bbb" strokeWidth=".4" />)}
    {[4, 17, 21.500, 26, 31, 36, 41, 45.500, 50].map((x) => <path key={x} d={`M${x} 27v12`} stroke="#bbb" strokeWidth=".4" />)}
    {[28.500, 31.500, 34.500, 37.500].map((y) => <Scribble key={y} x={5} y={y} w={43} h={0.900} c="#777" dash="3 2 1 3" />)}
    <Scribble x={52} y={23.500} w={15} c="#888" /><Scribble x={52} y={25.200} w={14} c="#888" /><Scribble x={55} y={31} w={8} c="#888" />
    <Scribble x={74} y={23.500} w={9} c="#888" /><Scribble x={74} y={26.500} w={12} c="#888" /><Scribble x={75} y={31} w={10} c="#888" />
  </g>,
  <g key="g">
    <Title>UJ type(JAL)</Title>
    <Scribble x={27} y={7} w={25} h={1.200} c="#222" />
    <Table x={22} y={10} w={66} h={1.800} cells={[12, 24, 36, 46, 56]} />
    <Scribble x={6} y={14.500} w={60} h={1.200} c="#222" />
    <Scribble x={6} y={16.500} w={4} /><Scribble x={6} y={18.500} w={8} /><Scribble x={6} y={20.500} w={23} h={1.200} c="#222" />
    {[22.300, 24, 25.500, 27, 29.800, 31.300, 32.800, 34.300, 35.800, 38.500, 40, 41.500, 43, 44.500, 47.500].map((y, i) => (
      <Scribble key={y} x={8} y={y} w={[18, 49, 26, 27, 30, 28, 29, 30, 28, 32, 30, 31, 40, 29, 30][i]} />
    ))}
  </g>,
  <g key="h">
    <Title>UJ type(JAL)</Title>
    <Scribble x={27} y={7} w={25} h={1.200} c="#222" />
    <Table x={22} y={10} w={66} h={1.800} cells={[12, 24, 36, 46, 56]} />
    <Scribble x={6} y={14.500} w={60} h={1.200} c="#222" />
    <Scribble x={6} y={16.500} w={4} /><Scribble x={6} y={18.500} w={8} /><Scribble x={6} y={20.500} w={23} h={1.200} c="#222" />
    <Scribble x={45} y={19.500} w={41} h={1.200} c="#222" /><Scribble x={45} y={21.300} w={18} h={1.200} c="#222" />
    {[28, 30, 32, 34, 35.500].map((y, i) => <Scribble key={y} x={34} y={y + 3} w={[50, 44, 32, 28, 30][i]} h={1.200} c="#222" />)}
    <Table x={36} y={38} w={40} h={1.600} cells={[8, 18, 30]} /><Table x={36} y={41} w={40} h={1.600} cells={[12, 20, 30]} />
    <Table x={36} y={45} w={40} h={1.600} cells={[8, 18, 30]} /><Table x={36} y={47.500} w={40} h={1.600} cells={[12, 20, 30]} />
    <path d="M50.500 9v5M52.500 38L55.500 16" stroke="#70ad47" strokeWidth="1.100" />
    <path d="M53.300 17l2.600-3.500 2 4z" fill="#70ad47" />
    <path d="M57.500 31v11" stroke="#4a86c8" strokeWidth="1" />
    <path d="M61.500 24v19" stroke="#e0702a" strokeWidth="1" />
    <path d="M73 29h-5.500v11H63M64 49.500l8-4" fill="none" stroke="#ffc000" strokeWidth="1.400" />
    <path d="M70.500 26.500l4 2.500-4 2.500zM65 37.500L61 40l4 2.500zM69.500 43.500l5 1-3.500 3.500zM66.500 47l-4 3 5 1z" fill="#ffc000" />
  </g>,
];

function Sidebar() {
  return (
    <div className="h-[842px] w-[137px] shrink-0 border-r-2 border-[#e0e2ea] bg-[#f5f6f9]">
      <div className="flex h-[42px] items-center pt-[2px] pl-[6px]">
        <Svg w={10} h={9} className="text-[#8b8f99]"><path d="M.5.5l4 4-4 4M5.500.5l4 4-4 4" /></Svg>
        <Svg w={15} h={14} className="ml-[38px] text-[#39445f]"><path d="M.7 1h3v2.500h-3zM.7 5.800h3v2.500h-3zM.7 10.600h3v2.500h-3z" /><path d="M5.500 2H15M5.500 7H15M5.500 12H15" strokeWidth="1.500" /></Svg>
        <div className="ml-[18px] flex h-5 w-[46px] items-center justify-center rounded-[3px] bg-[#d9dee5]">
          <Svg w={17} h={14} className="text-white"><path d="M.7.7h13v10.500H.7zM3 13.300h13V3" /></Svg>
        </div>
      </div>
      <div className="flex flex-col gap-[15.400px] pt-[3px]">
        {thumbs.map((t, i) => {
          const on = i === 4 || i > 5;
          return (
            <div key={i} className="flex h-[57px] items-center">
              <span className={"w-[28px] pb-[28px] text-right font-['Noto_Sans'] text-[13.500px] leading-[16px] font-bold " + (on ? "text-[#c9602c]" : "text-[#3b3f48]")}>{i + 1}</span>
              <div className={on ? "ml-[5px] border-2 border-[#f97b59] p-[2px]" : "ml-[6px] border border-[#b9bbc0] p-[2px]"}>
                <svg width="90" height="51" viewBox="0 0 90 51" className="block bg-white">{t}</svg>
              </div>
            </div>
          );
        })}
      </div>
    </div>
  );
}

/* ---------- slide ---------- */

function Box({ className, lines }) {
  return (
    <div className={"absolute text-[26.670px] leading-[32px] whitespace-pre text-black " + className}>
      {lines.map((l, i) => <div key={i}>{l}</div>)}
    </div>
  );
}

const R = ({ children }) => <span className="text-[#ff0000]">{children}</span>;

const bars = [
  ["RV32C", 100], ["RV32", 137, 131, 143], ["IA−32", 126, 115, 137], ["ARMv7", 134, 128, 139.500],
  ["Thumb−2", 99, 91, 107], ["MIPS", 153, 145, 161], ["microMIPS", 115, 106, 124], null,
  ["RV64C", 100], ["RV64", 135, 129, 141], ["x86−64", 134, 118, 150.500], ["ARMv8", 123, 114, 132],
  ["MIPS64", 151, 141, 161], ["microMIPS64", 114, 105, 123],
];

function Chart() {
  const Y = (v) => 174.300 - v * 0.91667;
  const X = (i) => 75.700 + i * 23.320;
  return (
    <svg width="400" height="250" viewBox="0 0 400 250" className="absolute top-[481px] left-[19px]">
      <g fill="#111" stroke="#111" strokeWidth=".15" fontSize="10.200" className="font-['Liberation_Serif']">
        {[0, 20, 40, 60, 80, 100, 120, 140, 160, 180].map((v) => (
          <text key={v} x="52.500" y={Y(v) + 3.800} textAnchor="end">{v}%</text>
        ))}
        <text transform="translate(15.500 91.500) rotate(-90)" textAnchor="middle" fontSize="10">Relative Code Size</text>
        {bars.map((b, i) => b && (
          <text key={i} transform={`translate(${X(i) + 2.500} 179.500) rotate(-90)`} textAnchor="end">{b[0]}</text>
        ))}
      </g>
      {bars.map((b, i) => b && (
        <rect key={i} x={X(i) - 6} y={Y(b[1])} width="12" height={b[1] * 0.91667} fill="#aaaaff" stroke="#55557a" strokeWidth=".9" />
      ))}
      <g stroke="#333" strokeWidth=".9" fill="none">
        {[20, 40, 60, 80, 100, 120, 140, 160].map((v) => <path key={v} d={`M58 ${Y(v)}h338.500`} opacity=".8" />)}
        <path d="M58 9.300h338.500v165H58z" />
        {bars.map((b, i) => <path key={i} d={b ? `M${X(i)} 9.300v5` : `M${X(i)} 9.300v5M${X(i)} 174.300v-5`} />)}
        {bars.map((b, i) => b && b[2] && (
          <path key={i} d={`M${X(i)} ${Y(b[3])}V${Y(b[2])}M${X(i) - 2.800} ${Y(b[3])}h5.600M${X(i) - 2.800} ${Y(b[2])}h5.600`} />
        ))}
      </g>
    </svg>
  );
}

const freq = [
  ["Instruction", "Static Frequency"], ["ADDI", "23.23%"], ["LD", "12.87%"], ["SD", "8.13%"], ["JAL", "7.73%"],
  ["ADD", "5.71%"], ["LW", "5.06%"], ["LUI", "3.69%"], ["FLD", "3.00%"], ["BEQ", "2.96%"], ["SLLI", "2.96%"],
  ["SW", "2.93%"], ["ADDIW", "2.33%"], ["BNE", "2.32%"], ["JALR", "1.68%"], ["FSD", "1.56%"], ["BGE", "1.15%"],
  ["FMUL.D", "0.84%"], ["FMADD.D", "0.84%"], ["BLT", "0.83%"], ["ADDW", "0.77%"],
];

function FreqTable() {
  return (
    <div className="absolute top-[427px] left-[1207px] w-[192px] border-t border-l border-[#555] font-['Liberation_Serif'] text-[12.800px] leading-[14px] text-[#1c1c1c]">
      {freq.map(([a, b], i) => (
        <div key={a} className="flex h-[15.905px] border-b border-[#666]">
          <span className={"w-[75px] border-r border-[#555] pl-[6px] " + (i === 0 ? "text-[13px] tracking-[0.300px]" : "")}>{a}</span>
          <span className={"w-[105px] border-r border-[#555] pr-[6px] text-right whitespace-nowrap " + (i === 0 ? "text-[13px] tracking-[0.200px]" : "")}>{b}</span>
          <span className="w-[11px] overflow-hidden pl-[7px]">{i === 0 ? "C" : ""}</span>
        </div>
      ))}
    </div>
  );
}

function Slide() {
  const cell = "flex items-center justify-center border-r border-[#333]";
  return (
    <div className="relative mt-[22px] ml-[174px] h-[799px] w-[1422px] bg-white font-['DejaVu_Sans'] shadow-[0_0_8px_3px_rgba(0,0,0,0.14)]">
      <div className="absolute top-[84px] left-[86.500px] text-[35.560px] leading-[42px] font-bold whitespace-nowrap text-black [text-shadow:1.500px_1.500px_2px_rgba(0,0,0,0.45)]">U type</div>
      <Box className="top-[100px] left-[501.600px]" lines={["U type is mainly coorapte with I-type and S-", "type"]} />

      <div className="absolute top-[165px] left-[20px] flex items-center font-['Liberation_Serif'] text-[24.500px] leading-[28px] text-[#1c1c1c]">
        <div className="flex h-[31px] w-[863px] border-y border-l border-[#333] pb-px">
          <div className={cell + " w-[561px]"}>imm[31:12]</div>
          <div className={cell + " w-[130px]"}>rd</div>
          <div className={cell + " flex-1 tracking-[0.500px]"}>opcode</div>
        </div>
        <span className="ml-[10px] pb-[2px] tracking-[0.800px] whitespace-nowrap">U-type</span>
      </div>

      <div className="absolute top-[219px] left-[584px] flex items-center font-['Liberation_Serif'] text-[22px] leading-[24px] text-[#1c1c1c]">
        <div className="flex h-[28px] w-[761px] border-y border-l border-[#333]">
          <div className={cell + " w-[293px] pb-[2px]"}>imm[11:0]</div>
          <div className={cell + " w-[115px] pb-[2px]"}>rs1</div>
          <div className={cell + " w-[86px] pb-[2px] tracking-[0.500px]"}>funct3</div>
          <div className={cell + " w-[115px] pb-[2px]"}>rd</div>
          <div className={cell + " flex-1 pb-[2px] tracking-[0.500px]"}>opcode</div>
        </div>
        <span className="ml-[7px] pb-[2px] tracking-[0.800px] whitespace-nowrap">I-type</span>
      </div>

      <Box className="top-[251.500px] left-[86.500px]" lines={[<>LUI rd, %hi(0x<R>12345</R>678) (-</>, "2048,2047)", <>ADD rd,%lo(0x12345<R>678</R>)</>]} />
      <Box className="top-[340px] left-[86.500px]" lines={[<>LUI rd, %hi(0x<R>1234</R>5678) (0 ,</>, "65535)", <>ADD rd,%lo(0x1234<R>5678</R>)</>, "Is MIPS better than RISC-V on this?"]} />
      <Box className="top-[286.500px] left-[624px]" lines={["If we use 16-bit immdate, the space for OP-code will", "decrease significantly. (MIPS need to use like", "REGIMM/COP1 code format…)", "From observation, most imm are either small or use", "ALL length."]} />
      <Box className="top-[554.500px] left-[575.500px]" lines={["Save op-code space for Compress type", "inst.", "(3/4 code space is reserved for compress", "type)"]} />
      <Box className="top-[650px] left-[496.500px]" lines={["Considering losses from padding, if all the", "compressed code uniformly distributed and follow", "the statistics, the code size will be reduced by 1/4-", "1/6"]} />

      <svg width="70" height="240" viewBox="0 0 70 240" className="absolute top-[315px] left-[540px]" fill="none" stroke="#5b9bd5" strokeWidth="1.100">
        <path d="M65.500 8.500v3H13V232M7.500 222.500l5.500 9.500 5.500-9.500" />
      </svg>
      <Chart />
      <FreqTable />
      <svg width="14" height="22" viewBox="0 0 14 22" className="absolute top-[522px] left-[716px]">
        <path d="M.5.8v16l3.800-3.600 2.800 6.500 2.500-1.100-2.700-6.200h5z" fill="#fff" stroke="#000" strokeWidth="1" />
      </svg>
    </div>
  );
}

/* ---------- notes and status ---------- */

function Tri({ up, double }) {
  const d = up ? "M0 4h8L4 0z" : "M0 0h8L4 4z";
  return (
    <svg width="6" height={double ? 8 : 4} viewBox={double ? "0 0 8 10" : "0 0 8 4"} preserveAspectRatio="none" fill="#8390b0">
      <path d={d} />
      {double && <path d={d} transform="translate(0 5.500)" />}
    </svg>
  );
}

function StatusBar() {
  return (
    <div className="flex h-[35px] items-center bg-[#f5f6f9] pl-[10px] text-[12px] text-[#23262d]">
      <span>幻灯片</span>
      <span className="ml-[23px]">Office Theme</span>
      <div className="flex-1" />
      <VLine className="h-4" />
      <Svg w={17} h={13} className="ml-[13px] text-[#2e3448]"><path d="M0 1.500h8M0 6.500h16M0 12h16M10 .5l3 3.500 3-3.500" /></Svg>
      <span className="ml-[1px]">备注</span>
      <Caret className="ml-[4px]" />
      <Svg w={17} h={16} className="ml-[9px] text-[#2e3448]"><path d="M9 2H1v13l2.500-2H15V7.500M13 0v8M9.500 4h7" /></Svg>
      <span className="ml-[3px]">批注</span>
      <VLine className="ml-[11px] h-4" />
      <div className="ml-[11px] flex h-6 w-[23px] items-center justify-center rounded-[2px] bg-[#d9dee5]">
        <Svg w={15} h={15} className="text-[#2e3448]"><path d="M.7.7h13.600v13.600H.7zM4.500.7v13.600M4.500 10.500h9.800" /></Svg>
      </div>
      <Svg w={15} h={15} className="ml-[7px] text-[#2e3448]"><path d="M.8.8h4.700v4.700H.8zM9.500.8h4.700v4.700H9.500zM.8 9.500h4.700v4.700H.8zM9.500 9.500h4.700v4.700H9.500z" /></Svg>
      <Svg w={16} h={15} className="ml-[11px] text-[#2e3448]"><path d="M8 2.500L6.500 1H.8v12H6l2 1.500 2-1.500h5.200V1H9.500zM8 2.500v12" /></Svg>
      <VLine className="ml-[14px] h-4" />
      <Svg w={17} h={16} className="ml-[14px] text-[#6d7280]"><path d="M11.500 6V4.500H.8V15h10.700v-2.500l4.700 2V5l-4.700 2.500M2.500 2h6M8.500 1c2 0 2.500 1.500 2.500 3.500M3 8h4v3H3z" /></Svg>
      <div className="ml-[14px] flex h-6 w-[31px] items-center justify-center rounded-[2px] bg-[#6f7a94]">
        <svg width="10" height="12" viewBox="0 0 10 12"><path d="M0 0l9.500 6L0 12z" fill="#fff" /></svg>
      </div>
      <VLine className="ml-[11px] h-4" />
      <Svg w={14} h={14} className="ml-[14px] text-[#4d5b80]"><path d="M.7 4V.7H4M10 .7h3.300V4M.7 10v3.300H4M10 13.300h3.300V10M4 4h6v6H4z" /></Svg>
      <span className="ml-[8px] w-[32px] whitespace-nowrap">110%</span>
      <Caret className="ml-[3px]" />
      <div className="ml-[12px] h-[2px] w-[10px] bg-[#39445f]" />
      <div className="ml-[16px] flex w-[130px] items-center">
        <div className="h-px w-[60px] bg-[#39445f]" />
        <div className="h-3 w-3 rounded-full border border-[#4a4f5c] bg-[#ececec]" />
        <div className="h-px flex-1 bg-[#d0d3da]" />
      </div>
      <Svg w={10} h={10} sw={2} className="mr-[17px] ml-[16px] text-[#39445f]"><path d="M5 0v10M0 5h10" /></Svg>
    </div>
  );
}

/* ---------- dock ---------- */

function Dock() {
  return (
    <div className="absolute bottom-0 left-[807px] flex h-[49px] w-[306px] items-center border border-b-0 border-[#aaa6a2] bg-[#f6f5f4] pl-[3px] shadow-[0_0_8px_rgba(0,0,0,0.25)]">
      <svg width="42" height="42" viewBox="0 0 42 42" className="shrink-0">
        <rect x=".5" y=".5" width="41" height="41" rx="2" fill="#02a8df" stroke="#0d6c8c" />
        <path d="M.5 27.500h41v12a2 2 0 0 1-2 2h-37a2 2 0 0 1-2-2z" fill="#47606e" />
        <path d="M0 27h42" stroke="#22323c" />
      </svg>
      <div className="ml-[6px] h-[35px] w-[2px] shrink-0 bg-[#999793]" />
      <svg width="39" height="37" viewBox="0 0 39 37" className="ml-[7px] shrink-0">
        <rect x=".5" y="1" width="38" height="35.500" rx="2" fill="#ccd3d8" stroke="#aab2b8" />
        <rect x="2.500" y="3" width="34" height="29.500" rx="1" fill="#263640" />
        <path d="M5 7l4.500 2.800L5 12.500" fill="none" stroke="#fff" strokeWidth="1.600" />
        <path d="M11 15.300h6" stroke="#fff" strokeWidth="1.600" />
      </svg>
      <svg width="30" height="39" viewBox="0 0 30 39" className="ml-[14px] shrink-0">
        <rect x=".5" y=".5" width="29" height="38" rx="2" fill="#cdd4d9" stroke="#aab2b8" />
        <rect x="1.500" y="1" width="27" height="17" fill="#02a8df" />
        <rect x="1.500" y="19" width="27" height="17" fill="#02a8df" />
        <path d="M1.500 18.500h27" stroke="#0a7ea6" />
        <path d="M11 8.500h8M11 25h8" stroke="#c9d6dc" strokeWidth="2.400" strokeLinecap="round" />
      </svg>
      <svg width="43" height="42" viewBox="0 0 44 42" className="ml-[11px] shrink-0">
        <circle cx="22.500" cy="21" r="20.500" fill="#08a9de" />
        <path d="M7 9c3-4 7-7 12-8l4 2-1 4-5 2 1 4-5 2-3 4-6-1 1-4zM27 1.500c5 1 9 3 12 7l-5 3-5-2 1-3-4-1zM26 17l4-2 3 2 5-1 1 3-5 1-3-1-4 1zM26 22l7-2 8 2 2 4c-1 5-4 9-8 11l-3-2-1-6-5-3z" fill="#64cdec" />
        <path d="M16.500 17L.5 31l7 1-4 7 4 2 4-7 5 4z" fill="#f6f8f9" stroke="#d6dadc" strokeWidth=".5" />
      </svg>
      <svg width="37" height="36" viewBox="0 0 37 36" className="ml-[8px] shrink-0">
        <rect x=".5" y=".5" width="36" height="35" rx="2" fill="#d3d9de" stroke="#b4bcc2" />
        <path d="M3 3h7v7H3zM12 3h7v7h-7zM28 3h6v7h-6zM28 11h6v6h-6zM3 18h6v6H3zM3 26h6v6H3zM11 26h7v6h-7z" fill="#6fcdea" />
        <circle cx="16" cy="15" r="10" fill="#5cc5e8" stroke="#22313a" strokeWidth="1.600" />
        <path d="M9 13c2-5 8-7 13-3z" fill="#a9e0f3" />
        <path d="M23 22l2 2" stroke="#f0c33a" strokeWidth="2.500" />
        <path d="M25 24l7 7" stroke="#22313a" strokeWidth="4" />
      </svg>
      <div className="ml-[9px] h-[35px] w-[2px] shrink-0 bg-[#999793]" />
      <svg width="39" height="35" viewBox="0 0 40 35" className="ml-[7px] shrink-0">
        <path d="M1.500 31V3l1.500-2.500h12L17 4v2h15v26z" fill="#7a7a78" stroke="#5a5a58" />
        <path d="M4 10.500h34.500L36 33H3.500z" fill="#6c9ad2" stroke="#3465a4" />
        <path d="M6 12.500h30l-1.500 9C24 21 14 24 5 26z" fill="#8fb3df" opacity=".7" />
      </svg>
    </div>
  );
}

export default function App() {
  return (
    <div className="relative flex h-[1080px] w-[1920px] flex-col overflow-hidden bg-[#f5f6f9] font-['Noto_Sans_CJK_SC',sans-serif]">
      <DesktopPanel />
      <TabBar />
      <MenuBar />
      <Ribbon />
      <div className="flex h-[883px]">
        <div className="flex h-[883px] w-[137px] flex-col border-b border-[#e0e2ea]"><Sidebar /></div>
        <div className="flex flex-1 flex-col">
          <div className="flex h-[842px]">
            <div className="flex-1 overflow-hidden"><Slide /></div>
            <div className="flex w-[13px] flex-col items-center bg-[#e9eaf0] pt-[13px]">
              <Tri up />
              <div className="mt-[384px] h-[87px] w-[11px] shrink-0 rounded-full bg-[#d5d8df]" />
              <div className="flex-1" />
              <div className="flex flex-col items-center gap-[11px] pb-[20px]">
                <Tri />
                <Tri up double />
                <Tri double />
              </div>
            </div>
          </div>
          <div className="flex h-[41px] border-t border-b border-[#e0e2ea]">
            <div className="flex-1 pt-[7px] pl-[10px] font-['DejaVu_Sans'] text-[13.100px] leading-[16px] whitespace-nowrap text-[#4b5468]">
              <div>LUI is primarily used in conjunction with ADDI to load arbitrary 32-bit constants into registers, but it can also be paired with load and store instructions to access any static 32-bit address, or with an indirect jump instruction to transfer control to any static 32-bit</div>
              <div>address.</div>
            </div>
            <div className="flex w-[13px] flex-col items-center justify-between bg-[#e9eaf0] py-[9px]">
              <Tri up />
              <div className="h-[6px] w-[11px] bg-[#d5d8df]" />
              <Tri />
            </div>
          </div>
        </div>
      </div>
      <StatusBar />
      <Dock />
    </div>
  );
}
